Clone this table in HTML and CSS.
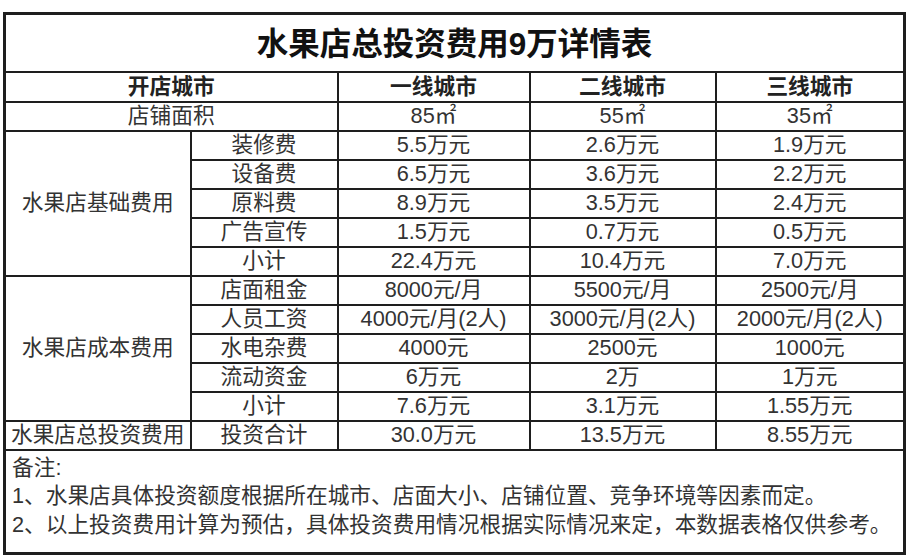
FILE: index.html
```html
<!DOCTYPE html>
<html lang="zh-CN">
<head>
<meta charset="utf-8">
<title>水果店总投资费用9万详情表</title>
<link rel="stylesheet" href="styles.css">
</head>
<body>
<table class="sheet">
  <colgroup>
    <col class="c1"><col class="c2"><col class="c3"><col class="c4"><col class="c5">
  </colgroup>
  <tbody>
    <tr class="title-row"><td colspan="5" class="title">水果店总投资费用9万详情表</td></tr>
    <tr class="head-row">
      <td colspan="2" class="head">开店城市</td>
      <td class="head">一线城市</td>
      <td class="head">二线城市</td>
      <td class="head">三线城市</td>
    </tr>
    <tr class="row"><td colspan="2">店铺面积</td><td>85㎡</td><td>55㎡</td><td>35㎡</td></tr>
    <tr class="row"><td rowspan="5">水果店基础费用</td><td>装修费</td><td>5.5万元</td><td>2.6万元</td><td>1.9万元</td></tr>
    <tr class="row"><td>设备费</td><td>6.5万元</td><td>3.6万元</td><td>2.2万元</td></tr>
    <tr class="row"><td>原料费</td><td>8.9万元</td><td>3.5万元</td><td>2.4万元</td></tr>
    <tr class="row"><td>广告宣传</td><td>1.5万元</td><td>0.7万元</td><td>0.5万元</td></tr>
    <tr class="row"><td>小计</td><td>22.4万元</td><td>10.4万元</td><td>7.0万元</td></tr>
    <tr class="row"><td rowspan="5">水果店成本费用</td><td>店面租金</td><td>8000元/月</td><td>5500元/月</td><td>2500元/月</td></tr>
    <tr class="row"><td>人员工资</td><td>4000元/月(2人)</td><td>3000元/月(2人)</td><td>2000元/月(2人)</td></tr>
    <tr class="row"><td>水电杂费</td><td>4000元</td><td>2500元</td><td>1000元</td></tr>
    <tr class="row"><td>流动资金</td><td>6万元</td><td>2万</td><td>1万元</td></tr>
    <tr class="row"><td>小计</td><td>7.6万元</td><td>3.1万元</td><td>1.55万元</td></tr>
    <tr class="row"><td>水果店总投资费用</td><td>投资合计</td><td>30.0万元</td><td>13.5万元</td><td>8.55万元</td></tr>
    <tr class="notes-row">
      <td colspan="5" class="notes">
        <div>备注:</div>
        <div>1、水果店具体投资额度根据所在城市、店面大小、店铺位置、竞争环境等因素而定。</div>
        <div>2、以上投资费用计算为预估，具体投资费用情况根据实际情况来定，本数据表格仅供参考。</div>
      </td>
    </tr>
  </tbody>
</table>
</body>
</html>
```

FILE: styles.css
```css
html, body {
  margin: 0;
  padding: 0;
  background: #ffffff;
}

body {
  padding: 12px 0 0 3px;
  font-family: "Liberation Sans", "Noto Sans CJK SC", sans-serif;
  color: #333333;
}

.sheet {
  border-collapse: collapse;
  table-layout: fixed;
  width: 900px;
  border: 3px solid #1e1e1e;
}

.c1 { width: 186px; }
.c2 { width: 147px; }
.c3 { width: 192px; }
.c4 { width: 186px; }
.c5 { width: 189px; }

.sheet td {
  border: 2px solid #1e1e1e;
  padding: 0;
  text-align: center;
  vertical-align: middle;
  font-size: 21.7px;
  line-height: 26px;
  white-space: nowrap;
  overflow: hidden;
}

.title-row { height: 58px; }
.head-row { height: 30px; }
.row { height: 29px; }
.notes-row { height: 104px; }

.sheet td.title {
  font-size: 31.5px;
  font-weight: 700;
  color: #111111;
  line-height: 40px;
  padding-top: 2px;
}

.sheet td.head {
  font-weight: 700;
  color: #222222;
}

.sheet td.notes {
  text-align: left;
  vertical-align: top;
  padding: 3px 0 0 6px;
  line-height: 28.5px;
}
```
